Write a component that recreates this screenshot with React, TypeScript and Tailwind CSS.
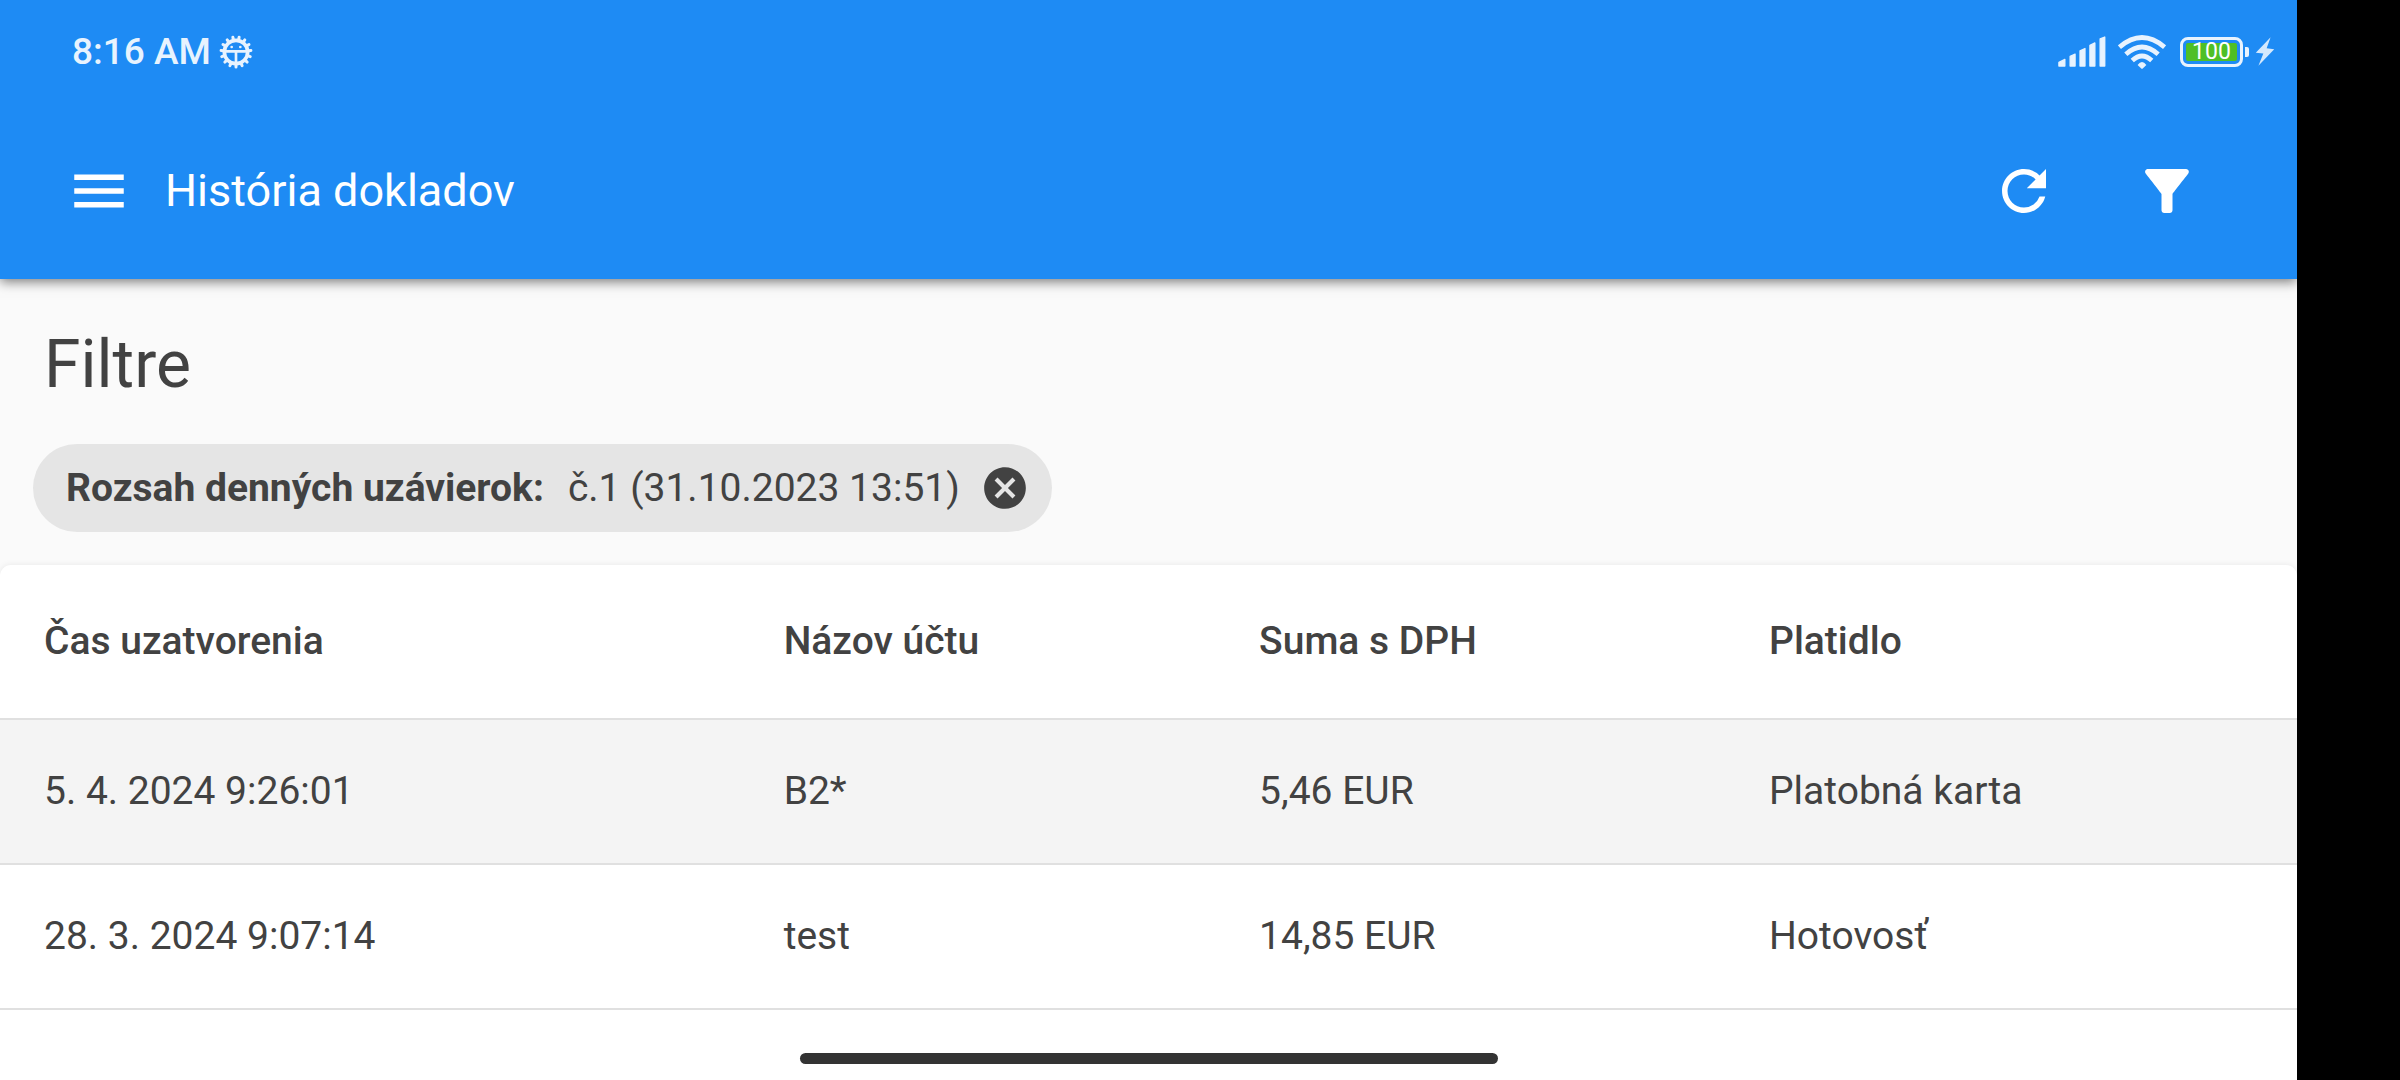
import { useState } from "react";
import { MdCancel, MdFilterAlt, MdMenu, MdRefresh } from "react-icons/md";

interface Receipt {
  closedAt: string;
  account: string;
  total: string;
  payment: string;
}

const RECEIPTS: Receipt[] = [
  {
    closedAt: "5. 4. 2024 9:26:01",
    account: "B2*",
    total: "5,46 EUR",
    payment: "Platobná karta",
  },
  {
    closedAt: "28. 3. 2024 9:07:14",
    account: "test",
    total: "14,85 EUR",
    payment: "Hotovosť",
  },
];

const GEAR_TEETH = Array.from({ length: 15 }, (_, i) => i * 24 + 12);

function GearIcon() {
  return (
    <svg viewBox="0 0 102 102" className="size-[34px]" aria-hidden="true">
      <g stroke="currentColor" fill="none">
        <circle cx="51" cy="51" r="35" strokeWidth="11" />
        {GEAR_TEETH.map((angle) => (
          <path
            key={angle}
            d="M51 13V6"
            strokeWidth="9"
            strokeLinecap="round"
            transform={`rotate(${angle} 51 51)`}
          />
        ))}
        <path d="M16 49H86M51 49V86" strokeWidth="8" />
      </g>
      <circle cx="38" cy="36" r="4" fill="currentColor" />
      <circle cx="64" cy="36" r="4" fill="currentColor" />
    </svg>
  );
}

function SignalIcon() {
  return (
    <svg viewBox="54 47 144 94" className="h-[31px] w-12" aria-hidden="true">
      <g
        fill="currentColor"
        stroke="currentColor"
        strokeWidth="4"
        strokeLinejoin="round"
      >
        <path d="M56 127L74 118V138H56Z" />
        <path d="M90 109L105 102V138H90Z" />
        <path d="M120 92L135 85V138H120Z" />
        <path d="M150 75L165 68V138H150Z" />
        <path d="M181 56L195 50V138H181Z" />
      </g>
    </svg>
  );
}

function WifiIcon() {
  return (
    <svg viewBox="235 43 142 101" className="h-[34px] w-12" aria-hidden="true">
      <g fill="none" stroke="currentColor" strokeWidth="14">
        <path d="M239 79Q306 22 373 79" />
        <path d="M258 100Q306 57 354 100" />
        <path d="M277 119Q306 92 335 119" />
      </g>
      <path
        d="M293 132Q306 114 319 132L309 142Q306 145 303 142Z"
        fill="currentColor"
      />
    </svg>
  );
}

function BoltIcon() {
  return (
    <svg viewBox="648 50 58 88" className="h-[29px] w-5" aria-hidden="true">
      <path
        d="M694 51L649 98L672 100L657 137L705 87L682 84Z"
        fill="currentColor"
        opacity="0.9"
      />
    </svg>
  );
}

function Battery() {
  return (
    <div className="flex items-center">
      <div className="h-[30px] w-[63px] rounded-lg border-3 border-current p-[3px]">
        <div className="flex h-full items-center justify-center rounded-xs bg-[#4fbf26] text-[23px] leading-none text-white">
          100
        </div>
      </div>
      <div className="ml-[2px] h-[10px] w-1 rounded-r-xs bg-current" />
    </div>
  );
}

function StatusBar() {
  return (
    <div className="flex h-[103px] items-center justify-between pr-[22px] pl-[72px] text-[#e8f3fe]">
      <div className="flex items-center gap-2">
        <span className="text-[37px] leading-none font-medium">8:16 AM</span>
        <GearIcon />
      </div>
      <div className="flex items-center">
        <SignalIcon />
        <div className="ml-3">
          <WifiIcon />
        </div>
        <div className="ml-[14px]">
          <Battery />
        </div>
        <div className="ml-[6px]">
          <BoltIcon />
        </div>
      </div>
    </div>
  );
}

export default function App() {
  const [rangeFilter, setRangeFilter] = useState<string | null>(
    "č.1 (31.10.2023 13:51)"
  );

  return (
    <div className="flex min-h-screen bg-black font-[Roboto,sans-serif] text-[#424242]">
      <div className="flex min-w-0 flex-1 flex-col overflow-hidden bg-[#fafafa]">
        <header className="z-10 bg-[#1e8bf4] text-white shadow-[0_3px_11px_rgba(0,0,0,0.5)]">
          <StatusBar />
          <div className="flex h-[176px] items-center pr-16 pl-[33px]">
            <button type="button" aria-label="Menu" className="p-[33px]">
              <MdMenu className="size-[66px]" />
            </button>
            <h1 className="flex-1 text-[45px]">História dokladov</h1>
            <div className="flex gap-[11px]">
              <button type="button" aria-label="Obnoviť" className="p-[33px]">
                <MdRefresh className="size-[66px]" />
              </button>
              <button type="button" aria-label="Filter" className="p-[33px]">
                <MdFilterAlt className="size-[66px]" />
              </button>
            </div>
          </div>
        </header>

        {/* Filtre */}
        <section className="px-[33px] pt-[42px] pb-[33px]">
          <h2 className="mb-[35px] px-[11px] text-[66px] leading-[88px]">
            Filtre
          </h2>
          {rangeFilter && (
            <div className="inline-flex h-[88px] items-center rounded-full bg-[#e5e5e5] pr-[22px] pl-[33px] text-[39px]">
              <strong className="mr-6 font-bold">
                Rozsah denných uzávierok:
              </strong>
              <span>{rangeFilter}</span>
              <button
                type="button"
                aria-label="Odstrániť filter"
                onClick={() => setRangeFilter(null)}
                className="ml-5"
              >
                <MdCancel className="size-[50px]" />
              </button>
            </div>
          )}
        </section>

        {/* Doklady */}
        <main className="flex flex-1 flex-col rounded-t-[11px] bg-white shadow-[0_0_6px_rgba(0,0,0,0.08)]">
          <table className="w-full table-fixed border-collapse text-left text-[39px]">
            <colgroup>
              <col className="w-[32.2%]" />
              <col className="w-[20.7%]" />
              <col className="w-[22.2%]" />
              <col />
            </colgroup>
            <thead>
              <tr className="h-[154px] border-b-2 border-[#e0e0e0]">
                <th className="px-11 font-medium">Čas uzatvorenia</th>
                <th className="px-11 font-medium">Názov účtu</th>
                <th className="px-11 font-medium">Suma s DPH</th>
                <th className="px-11 font-medium">Platidlo</th>
              </tr>
            </thead>
            <tbody>
              {RECEIPTS.map((receipt) => (
                <tr
                  key={receipt.closedAt}
                  className="h-[145px] border-b-2 border-[#e0e0e0] odd:bg-[#f4f4f4]"
                >
                  <td className="px-11">{receipt.closedAt}</td>
                  <td className="px-11">{receipt.account}</td>
                  <td className="px-11">{receipt.total}</td>
                  <td className="px-11">{receipt.payment}</td>
                </tr>
              ))}
            </tbody>
          </table>
          <div className="mx-auto mt-auto mb-4 h-[11px] w-[698px] max-w-full rounded-full bg-[#333333]" />
        </main>
      </div>
      <div className="w-[103px] shrink-0 bg-black" />
    </div>
  );
}
